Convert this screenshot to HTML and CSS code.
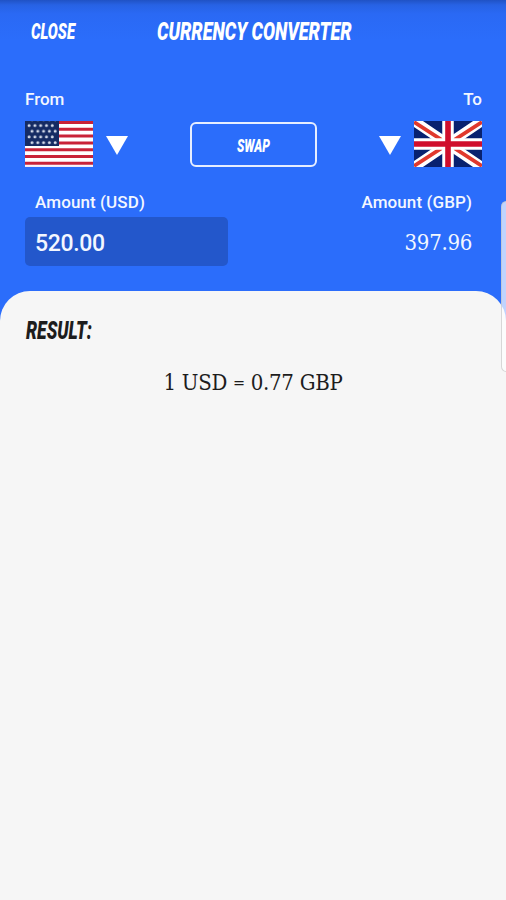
FILE: index.html
```html
<!DOCTYPE html>
<html lang="en">

<head>
    <meta charset="UTF-8">
    <meta name="viewport" content="width=device-width, initial-scale=1.0">
    <title>Currency Converter</title>
    <link rel="stylesheet" href="styles.css">
</head>

<body>
    <div class="converter">
        <header class="header">
            <svg class="display close" width="58" height="36">
                <text x="1" y="23" textLength="44" lengthAdjust="spacingAndGlyphs">CLOSE</text>
            </svg>
            <svg class="display title" width="215" height="36">
                <text x="1" y="24" textLength="194.5" lengthAdjust="spacingAndGlyphs">CURRENCY CONVERTER</text>
            </svg>
        </header>

        <div class="row labels">
            <span>From</span>
            <span>To</span>
        </div>

        <div class="row currencies">
            <div class="currency">
                <svg class="flag" viewBox="0 0 68 46" preserveAspectRatio="none">
                    <defs>
                        <pattern id="stars" width="5.8" height="11.4" patternUnits="userSpaceOnUse">
                            <circle cx="4.1" cy="4.5" r="1.5" fill="#d5dcea" />
                        </pattern>
                        <pattern id="stars2" x="2.9" y="5.7" width="5.8" height="11.4" patternUnits="userSpaceOnUse">
                            <circle cx="4.1" cy="4.5" r="1.5" fill="#d5dcea" />
                        </pattern>
                    </defs>
                    <rect width="68" height="46" fill="#fff" />
                    <path stroke="#c92238" stroke-width="3" d="M0 1.5H68M0 8.2H68M0 15H68M0 21.9H68M0 28.7H68M0 35.5H68M0 42.3H68" />
                    <rect y="44.5" width="68" height="1.5" fill="#f1eaf5" />
                    <rect width="34" height="25" fill="#152b63" />
                    <rect width="30" height="24" fill="url(#stars)" />
                    <rect x="4" width="29" height="24" fill="url(#stars2)" />
                </svg>
                <svg class="arrow" viewBox="0 0 22 19"><path d="M0 0H22L11 19Z" /></svg>
            </div>

            <button class="swap">
                <svg class="display" width="46" height="28">
                    <text x="6" y="20.5" textLength="33" lengthAdjust="spacingAndGlyphs">SWAP</text>
                </svg>
            </button>

            <div class="currency">
                <svg class="arrow" viewBox="0 0 22 19"><path d="M0 0H22L11 19Z" /></svg>
                <svg class="flag" viewBox="0 0 68 46" preserveAspectRatio="none">
                    <rect width="68" height="46" fill="#08216f" />
                    <path stroke="#fff" stroke-width="10" d="M0 0L68 46M68 0L0 46" />
                    <path stroke="#e0392d" stroke-width="3.8" d="M0 1L68 45M68 1L0 45" />
                    <path stroke="#fff" stroke-width="11.5" d="M34 0V46M0 23H68" />
                    <path stroke="#d00e2c" stroke-width="5.6" d="M34 0V46M0 23H68" />
                </svg>
            </div>
        </div>

        <div class="row amounts">
            <div class="amount">
                <label class="amount-label">Amount (USD)</label>
                <div class="amount-input">520.00</div>
            </div>
            <div class="amount amount-to">
                <label class="amount-label">Amount (GBP)</label>
                <div class="amount-output">397.96</div>
            </div>
        </div>

        <main class="result">
            <svg class="display result-title" width="84" height="36">
                <text x="1" y="24" textLength="66" lengthAdjust="spacingAndGlyphs">RESULT:</text>
            </svg>
            <p class="rate">1 USD <span class="equals">=</span> 0.77 GBP</p>
        </main>

        <div class="edge-handle"></div>
    </div>
</body>

</html>
```

FILE: styles.css
```css
* {
    box-sizing: border-box;
}

body {
    margin: 0;
    font-family: Roboto, sans-serif;
    font-weight: 500;
    color: #f3f7ff;
}

.converter {
    position: relative;
    display: flex;
    flex-direction: column;
    height: 900px;
    overflow: hidden;
    background: linear-gradient(#2052c4 0, #2762e4 5px, #2a69f4 14px, #2b6dfb 40px);
}

.display {
    display: block;
    flex: none;
    overflow: visible;
    fill: #fff;
    font-family: Roboto, sans-serif;
    font-size: 25px;
    font-style: italic;
    font-weight: 900;
}

.header {
    display: flex;
    padding: 16px 0 0 30px;
    height: 89px;
}

.close {
    font-size: 22px;
}

.title {
    margin-left: 68px;
}

.row {
    display: flex;
    justify-content: space-between;
    padding: 0 24px 0 25px;
}

.labels {
    height: 32px;
    font-size: 17px;
    line-height: 21px;
}

.currencies {
    align-items: center;
    height: 46px;
}

.currency {
    display: flex;
    align-items: center;
    gap: 13px;
}

.flag {
    display: block;
    width: 68px;
    height: 46px;
}

.arrow {
    width: 22px;
    height: 19px;
    margin-top: 2px;
    fill: #fff;
}

.swap {
    display: flex;
    align-items: center;
    justify-content: center;
    width: 127px;
    height: 45px;
    margin-top: 1px;
    padding: 0;
    background: none;
    border: 2px solid #e6eeff;
    border-radius: 6px;
}

.swap .display {
    font-size: 18px;
}

.amounts {
    height: 124px;
    padding-top: 24px;
}

.amount {
    width: 203px;
}

.amount-label {
    display: block;
    height: 26px;
    padding: 0 10px;
    font-size: 17px;
    line-height: 23px;
    letter-spacing: 0.1px;
}

.amount-input {
    height: 49px;
    padding: 0 10px;
    background: #2357cb;
    border-radius: 5px;
    font-size: 23px;
    line-height: 53px;
    letter-spacing: -0.35px;
}

.amount-to {
    text-align: right;
}

.amount-output {
    padding: 0 10px;
    font-family: "DejaVu Serif Condensed", "DejaVu Serif", serif;
    font-stretch: condensed;
    font-size: 22px;
    font-weight: 400;
    line-height: 52px;
    letter-spacing: -0.3px;
}

.result {
    flex: 1;
    padding: 24px 25px;
    background: #f6f6f6;
    border-radius: 30px 30px 0 0;
    color: #1d1d1d;
}

.result-title {
    fill: #1d1d1d;
}

.rate {
    margin: 18px 0 0;
    font-family: "DejaVu Serif Condensed", "DejaVu Serif", serif;
    font-stretch: condensed;
    font-size: 22px;
    font-weight: 400;
    line-height: 28px;
    letter-spacing: -0.3px;
    text-align: center;
}

.equals {
    font-size: 16px;
    line-height: 1;
    vertical-align: 2px;
}

/* side panel handle peeking in over the right edge */
.edge-handle {
    position: absolute;
    top: 201px;
    right: -6px;
    width: 11px;
    height: 171px;
    background: rgba(255, 255, 255, 0.7);
    border: 1px solid rgba(190, 190, 190, 0.6);
    border-radius: 6px;
}
```
